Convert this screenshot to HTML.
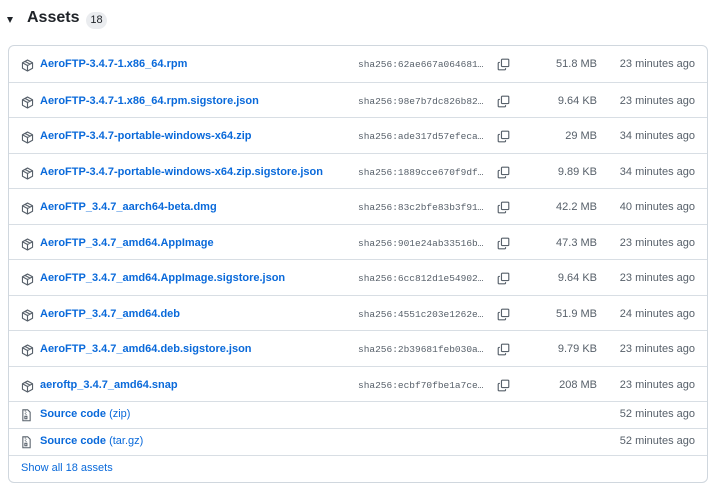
<!DOCTYPE html>
<html><head><style>
body{margin:0;background:#fff;font-family:"Liberation Sans",sans-serif;color:#1f2328;}
.tri{position:absolute;left:7px;top:17px;width:0;height:0;border-left:3.5px solid transparent;border-right:3.5px solid transparent;border-top:6px solid #1f2328;}
.title{position:absolute;left:27px;top:9px;font-size:16px;font-weight:bold;}
.cnt{position:absolute;left:86px;top:12px;width:21px;height:17px;border-radius:9px;background:#eaecef;font-size:11px;text-align:center;line-height:17px;}
.box{position:absolute;left:8px;top:45px;width:698px;height:436px;border:1px solid #d0d7de;border-radius:6px;}
.row{position:absolute;left:0;width:698px;border-top:1px solid #d8dee4;}
.row:first-child{border-top:none}
.ic{position:absolute;left:12px;}
.nm{position:absolute;left:31px;font-size:11px;font-weight:bold;color:#0969da;}
.nm span{font-weight:normal}
.sha{position:absolute;left:349px;font-family:"Liberation Mono",monospace;font-size:9.5px;color:#57606a;}
.cp{position:absolute;left:488px;}
.sz{position:absolute;right:110px;font-size:11px;color:#57606a;}
.tm{position:absolute;right:12px;font-size:11px;color:#57606a;}
.show{position:absolute;left:12px;font-size:11px;color:#0969da;}
</style></head><body>
<div class="tri"></div><div class="title">Assets</div><div class="cnt">18</div>
<div class="box" id="b"></div>
<script>
const rows=[
["AeroFTP-3.4.7-1.x86_64.rpm","62ae667a064681","51.8 MB","23"],
["AeroFTP-3.4.7-1.x86_64.rpm.sigstore.json","98e7b7dc826b82","9.64 KB","23"],
["AeroFTP-3.4.7-portable-windows-x64.zip","ade317d57efeca","29 MB","34"],
["AeroFTP-3.4.7-portable-windows-x64.zip.sigstore.json","1889cce670f9df","9.89 KB","34"],
["AeroFTP_3.4.7_aarch64-beta.dmg","83c2bfe83b3f91","42.2 MB","40"],
["AeroFTP_3.4.7_amd64.AppImage","901e24ab33516b","47.3 MB","23"],
["AeroFTP_3.4.7_amd64.AppImage.sigstore.json","6cc812d1e54902","9.64 KB","23"],
["AeroFTP_3.4.7_amd64.deb","4551c203e1262e","51.9 MB","24"],
["AeroFTP_3.4.7_amd64.deb.sigstore.json","2b39681feb030a","9.79 KB","23"],
["aeroftp_3.4.7_amd64.snap","ecbf70fbe1a7ce","208 MB","23"]];
const pkg='<svg width="13" height="13" viewBox="0 0 16 16" fill="none" stroke="#57606a" stroke-width="1.4" stroke-linejoin="round"><path d="M8 1.2 14.2 4.6v6.8L8 14.8 1.8 11.4V4.6Z M1.8 4.6 8 8l6.2-3.4 M8 8v6.8 M4.9 2.9l6.2 3.4"/></svg>';
const copy='<svg width="13" height="13" viewBox="0 0 16 16" fill="none" stroke="#57606a" stroke-width="1.4"><rect x="5.5" y="1.5" width="9" height="9" rx="1"/><path d="M3.5 5.5h-1a1 1 0 0 0-1 1v7a1 1 0 0 0 1 1h7a1 1 0 0 0 1-1v-1"/></svg>';
const zip='<svg width="11" height="13" viewBox="0 0 12 16" fill="none" stroke="#57606a" stroke-width="1.3"><path d="M1.5 1h6l3 3v10.5h-9z"/><path d="M4.5 2v1M5.5 3.5v1M4.5 5v1M5.5 6.5v1" /><rect x="4" y="9" width="2.5" height="3"/></svg>';
let h='',y=0;
rows.forEach(r=>{h+=`<div class="row" style="top:${y}px;height:35.5px"><div class="ic" style="top:13px">${pkg}</div><div class="nm" style="top:12px">${r[0]}</div><div class="sha" style="top:13px">sha256:${r[1]}…</div><div class="cp" style="top:12px">${copy}</div><div class="sz" style="top:12px">${r[2]}</div><div class="tm" style="top:12px">${r[3]} minutes ago</div></div>`;y+=35.5;});
[["zip"],["tar.gz"]].forEach(r=>{h+=`<div class="row" style="top:${y}px;height:27px"><div class="ic" style="top:7px">${zip}</div><div class="nm" style="top:6px">Source code <span>(${r[0]})</span></div><div class="tm" style="top:6px">52 minutes ago</div></div>`;y+=27;});
h+=`<div class="row" style="top:${y}px;height:27px"><div class="show" style="top:6px">Show all 18 assets</div></div>`;
document.getElementById('b').innerHTML=h;
</script>
</body></html>
